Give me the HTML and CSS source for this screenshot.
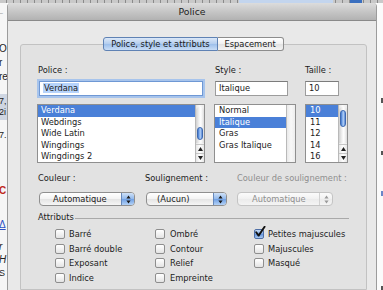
FILE: index.html
```html
<!DOCTYPE html>
<html lang="fr">
<head>
<meta charset="utf-8">
<title>Police</title>
<link rel="stylesheet" href="styles.css">
</head>
<body>
<div class="screen">
  <div class="ruler">
    <span class="rl-a"></span><span class="rl-sel"></span><span class="rl-b"></span><span class="rl-mark"></span>
  </div>
  <div class="main">
    <div class="doc-left">
      <span class="frag f1">–</span>
      <span class="frag f2">O</span>
      <span class="frag f3">r</span>
      <span class="frag f4">re</span>
      <span class="frag hl f5">7,<br>2i</span>
      <span class="frag f6">7.</span>
      <span class="frag red f7">C</span>
      <span class="frag blue f8">Δ</span>
      <span class="frag it f9">r</span>
      <span class="frag it f10">H</span>
      <span class="frag f11">S</span>
    </div>
    <div class="dialog">
      <div class="titlebar">Police</div>
      <div class="dbody">
        <div class="tabs">
          <span class="tab sel">Police, style et attributs</span><span class="tab">Espacement</span>
        </div>
        <div class="box">
          <div class="grid3">
            <div class="lbl">Police :</div>
            <div class="lbl">Style :</div>
            <div class="lbl">Taille :</div>

            <div class="field focus"><span class="selection">Verdana</span></div>
            <div class="field style-field">Italique</div>
            <div class="field size-field">10</div>

            <div class="list">
              <div class="rows">
                <div class="row sel">Verdana</div>
                <div class="row">Webdings</div>
                <div class="row">Wide Latin</div>
                <div class="row">Wingdings</div>
                <div class="row">Wingdings 2</div>
              </div>
              <div class="sbar">
                <div class="track"><div class="thumb t-font"></div></div>
                <div class="sbtn"><svg width="5" height="4" viewBox="0 0 5 4"><path d="M2.5 0 L5 4 L0 4 Z" fill="#222"/></svg></div>
                <div class="sbtn"><svg width="5" height="4" viewBox="0 0 5 4"><path d="M0 0 L5 0 L2.5 4 Z" fill="#222"/></svg></div>
              </div>
            </div>
            <div class="list">
              <div class="rows rows-style">
                <div class="row">Normal</div>
                <div class="row sel">Italique</div>
                <div class="row">Gras</div>
                <div class="row">Gras Italique</div>
              </div>
              <div class="sbar empty"></div>
            </div>
            <div class="list">
              <div class="rows rows-size">
                <div class="row sel">10</div>
                <div class="row">11</div>
                <div class="row">12</div>
                <div class="row">14</div>
                <div class="row">16</div>
              </div>
              <div class="sbar">
                <div class="track"><div class="thumb t-size"></div></div>
                <div class="sbtn"><svg width="5" height="4" viewBox="0 0 5 4"><path d="M2.5 0 L5 4 L0 4 Z" fill="#222"/></svg></div>
                <div class="sbtn"><svg width="5" height="4" viewBox="0 0 5 4"><path d="M0 0 L5 0 L2.5 4 Z" fill="#222"/></svg></div>
              </div>
            </div>
          </div>

          <div class="row2">
            <div class="lbl c1">Couleur :</div>
            <div class="lbl c2">Soulignement :</div>
            <div class="lbl c3 dis">Couleur de soulignement :</div>

            <div class="popup p1"><span class="ptext">Automatique</span><span class="parrow"><svg width="5" height="9" viewBox="0 0 5 9"><path d="M2.5 0.5 L4.6 3.4 L0.4 3.4 Z M0.4 5.6 L4.6 5.6 L2.5 8.5 Z" fill="#1b1b1b"/></svg></span></div>
            <div class="popup p2"><span class="ptext">(Aucun)</span><span class="parrow"><svg width="5" height="9" viewBox="0 0 5 9"><path d="M2.5 0.5 L4.6 3.4 L0.4 3.4 Z M0.4 5.6 L4.6 5.6 L2.5 8.5 Z" fill="#1b1b1b"/></svg></span></div>
            <div class="popup p3 disabled"><span class="ptext">Automatique</span><span class="parrow"><svg width="5" height="9" viewBox="0 0 5 9"><path d="M2.5 0.5 L4.6 3.4 L0.4 3.4 Z M0.4 5.6 L4.6 5.6 L2.5 8.5 Z" fill="#9a9a9a"/></svg></span></div>
          </div>

          <div class="attr-head">
            <span class="lbl">Attributs</span><span class="rule"></span>
          </div>

          <div class="checks">
            <label class="chk"><span class="cb"></span>Barré</label>
            <label class="chk"><span class="cb"></span>Ombré</label>
            <label class="chk"><span class="cb on"><svg class="tick" width="12" height="12" viewBox="0 0 12 12"><path d="M2.2 6.2 L4.6 9.6 L10.6 0.8" fill="none" stroke="#111" stroke-width="1.9" stroke-linecap="round" stroke-linejoin="round"/></svg></span>Petites majuscules</label>

            <label class="chk"><span class="cb"></span>Barré double</label>
            <label class="chk"><span class="cb"></span>Contour</label>
            <label class="chk"><span class="cb"></span>Majuscules</label>

            <label class="chk"><span class="cb"></span>Exposant</label>
            <label class="chk"><span class="cb"></span>Relief</label>
            <label class="chk"><span class="cb"></span>Masqué</label>

            <label class="chk"><span class="cb"></span>Indice</label>
            <label class="chk"><span class="cb"></span>Empreinte</label>
            <span></span>
          </div>
        </div>
      </div>
    </div>
    <div class="doc-right">
      <span class="dot d1"></span><span class="dot d2"></span><span class="dot d3"></span><span class="dot d4"></span>
    </div>
  </div>
</div>
</body>
</html>
```

FILE: styles.css
```css
* { box-sizing: border-box; margin: 0; padding: 0; }
html, body { width: 383px; height: 290px; overflow: hidden; }
body {
  font-family: "DejaVu Sans", "Liberation Sans", sans-serif;
  font-size: 8.3px;
  color: #1c1c1c;
  background: #ffffff;
}
.screen { width: 383px; height: 290px; display: flex; flex-direction: column; overflow: hidden; }

/* ruler of the document behind */
.ruler {
  height: 3px; flex: none; display: flex;
  background: repeating-linear-gradient(90deg, #c9c9c9 0 6px, #8a8a8a 6px 7px);
}
.rl-a { width: 239px; }
.rl-sel { width: 94px; background: #c3d5ee; }
.rl-b { width: 17px; }
.rl-mark { width: 12px; background: #3a6fbf; }

.main { flex: 1; display: flex; min-height: 0; }

/* document fragments on the left */
.doc-left {
  width: 7px; flex: none; overflow: hidden;
  background: #f6f6f6;
  display: flex; flex-direction: column;
  font-family: "Liberation Sans", sans-serif; font-size: 10px; line-height: 10px;
  color: #222;
}
.frag { display: block; white-space: nowrap; margin-left: -1px; }
.f1 { margin-top: 5px; color: #999; font-size: 7px; }
.f2 { margin-top: 26px; }
.f3 { margin-top: 4px; }
.f4 { margin-top: 4px; }
.f5 { margin-top: 12px; background: #cfd6e2; padding: 2px 0; line-height: 11px; font-size: 9px; }
.f6 { margin-top: 10px; font-size: 9px; }
.f7 { margin-top: 46px; font-weight: bold; }
.red { color: #c0281c; }
.f8 { margin-top: 24px; text-decoration: underline; }
.blue { color: #2a4fc4; }
.f9 { margin-top: 12px; }
.it { font-style: italic; }
.f10 { margin-top: 3px; }
.f11 { margin-top: 3px; font-size: 9px; }

.doc-right {
  width: 6px; flex: none; background: #fbfbfb;
  display: flex; flex-direction: column; align-items: flex-end;
}
.dot { width: 2px; height: 5px; background: #555; }
.d1 { margin-top: 95px; }
.d2 { margin-top: 48px; }
.d3 { margin-top: 36px; background: #6a86c8; }
.d4 { margin-top: 90px; }

/* dialog */
.dialog {
  width: 370px; flex: none;
  display: flex; flex-direction: column;
  background: #e9e9e9;
  border-left: 1px solid #9c9c9c;
  border-right: 1px solid #9c9c9c;
  border-radius: 4px 4px 0 0;
  overflow: hidden;
}
.titlebar {
  height: 18px; flex: none;
  background: linear-gradient(#dcdcdc, #c2c2c2 60%, #b2b2b2);
  border-bottom: 1px solid #8a8a8a;
  text-align: center;
  font-size: 9.3px; line-height: 18px; color: #222;
}
.dbody {
  flex: 1; display: flex; flex-direction: column;
  padding: 16px 9px 0 12px;
}

/* segmented tabs */
.tabs { display: flex; justify-content: center; position: relative; z-index: 1; }
.tab {
  height: 14px; line-height: 12px; padding: 0 7px;
  border: 1px solid #8d8d8d;
  background: linear-gradient(#ffffff, #f1f1f1 50%, #e2e2e2 51%, #f4f4f4);
  color: #1a1a1a;
}
.tab.sel {
  border-radius: 3px 0 0 3px;
  border-color: #5f82b4;
  background: linear-gradient(#dbe8f8, #b3cdee 50%, #9cbfeb 51%, #c9ddf6);
}
.tab + .tab { border-left: none; border-radius: 0 3px 3px 0; }

.box {
  flex: 1;
  margin-top: -7px;
  border: 1px solid #c2c2c2;
  border-radius: 3px 3px 0 0;
  background: #e2e2e2;
  padding: 20px 18px 0 16px;
}

.lbl { line-height: 10px; height: 10px; white-space: nowrap; }
.dis { color: #8f8f8f; }

.grid3 {
  display: grid;
  grid-template-columns: 168px 82px 43px;
  grid-template-rows: auto auto auto;
  column-gap: 9px;
  row-gap: 0;
}
.grid3 > .lbl:nth-child(1) { padding-left: 1px; }
.grid3 > .lbl:nth-child(2) { padding-left: 1px; }

.field {
  margin-top: 6px; height: 15px;
  background: #fff;
  border: 1px solid #9c9c9c;
  border-top-color: #7c7c7c;
  line-height: 13px;
  padding-left: 3px;
  white-space: nowrap;
}
.field.focus {
  margin-left: 2px; margin-right: 2px;
  border-color: #6f98d4;
  box-shadow: 0 0 0 2px #a7c4ec;
}
.selection { background: #b6d3fb; padding: 0 1px; }
.style-field { width: 73px; margin-left: 1px; }
.size-field { width: 34px; padding-left: 3px; }

.list {
  margin-top: 8px; height: 59px;
  display: flex;
  background: #fff;
  border: 1px solid #8f8f8f;
  overflow: hidden;
}
.rows { flex: 1; min-width: 0; }
.row { height: 11.5px; line-height: 11.5px; padding-left: 3px; white-space: nowrap; }
.rows-style .row, .rows-size .row { padding-left: 4px; }
.row.sel { background: #4a80d8; color: #fff; }

.sbar {
  width: 9px; flex: none;
  display: flex; flex-direction: column;
  border-left: 1px solid #b9b9b9;
  background: linear-gradient(90deg, #e4e4e4, #fafafa 45%, #ececec);
}
.sbar.empty { width: 9px; background: linear-gradient(90deg, #e9e9e9, #f8f8f8 50%, #ededed); }
.track {
  flex: 1;
  margin: 2px 0 1px;
  border-radius: 4px 4px 0 0;
  background: linear-gradient(90deg, #d0d0d0, #f3f3f3 40%, #ffffff 60%, #dcdcdc);
}
.thumb {
  margin: 0 1px;
  border-radius: 4px;
  background: linear-gradient(90deg, #3f74cc, #8cb6ef 40%, #b8d3f6 55%, #5a8ad8);
  border: 1px solid #3d69b0;
}
.t-font { margin-top: 20px; height: 13px; }
.t-size { margin-top: 3px; height: 17px; }
.sbtn {
  height: 9px; flex: none;
  display: flex; align-items: center; justify-content: center;
  border-top: 1px solid #c6c6c6;
  background: linear-gradient(90deg, #e6e6e6, #ffffff 50%, #e6e6e6);
}

/* popups row */
.row2 {
  margin-top: 10px;
  display: grid;
  grid-template-columns: 108px 92px 112px;
  grid-template-rows: 10px 14px;
  row-gap: 9px;
}
.row2 .c1 { padding-left: 1px; }
.popup {
  height: 14px;
  display: flex; align-items: center;
  border: 1px solid #8f8f8f;
  border-radius: 4px;
  background: linear-gradient(#ffffff, #f3f3f3 50%, #e4e4e4 51%, #f6f6f6);
  white-space: nowrap;
  overflow: hidden;
}
.p1 { width: 96px; margin-left: 2px; }
.p1 .ptext { padding-left: 13px; }
.p2 { width: 81px; margin-left: 1px; }
.p2 .ptext { padding-left: 10px; }
.p3 { width: 96px; }
.p3 .ptext { padding-left: 14px; }
.ptext { flex: 1; line-height: 12px; }
.parrow {
  width: 13px; align-self: stretch; flex: none;
  display: flex; align-items: center; justify-content: center;
  border-left: 1px solid #6688bb;
  background: linear-gradient(#cfe1f7, #90b8ec 50%, #6fa0e4 51%, #b4d2f6);
}
.popup.disabled { border-color: #c4c4c4; background: linear-gradient(#fbfbfb, #f1f1f1 50%, #ebebeb 51%, #f4f4f4); color: #909090; }
.popup.disabled .parrow { background: none; border-left: 1px solid #d2d2d2; }

/* attributes */
.attr-head { margin-top: 6px; display: flex; align-items: flex-start; height: 10px; }
.attr-head .lbl { padding-left: 1px; }
.rule { flex: 1; height: 7px; border-bottom: 1px solid #a9a9a9; margin-left: 1px; margin-right: -1px; }

.checks {
  margin-top: 5px; margin-left: 18px;
  display: grid;
  grid-template-columns: 100px 99px 1fr;
  grid-auto-rows: 14.5px;
}
.chk { display: flex; align-items: center; gap: 4px; white-space: nowrap; }
.checks .chk:nth-child(3n+2) { gap: 5px; }
.cb {
  width: 10px; height: 10px; flex: none;
  position: relative;
  border: 1px solid #8e8e8e;
  border-radius: 2px;
  background: linear-gradient(#ffffff, #f2f2f2 50%, #e3e3e3);
}
.cb.on {
  border-color: #4f6fa6;
  background: linear-gradient(#c5dbf5, #7ea9e6 50%, #5f91dc 51%, #a9c9f2);
}
.tick { position: absolute; left: -1px; top: -4px; }
```
